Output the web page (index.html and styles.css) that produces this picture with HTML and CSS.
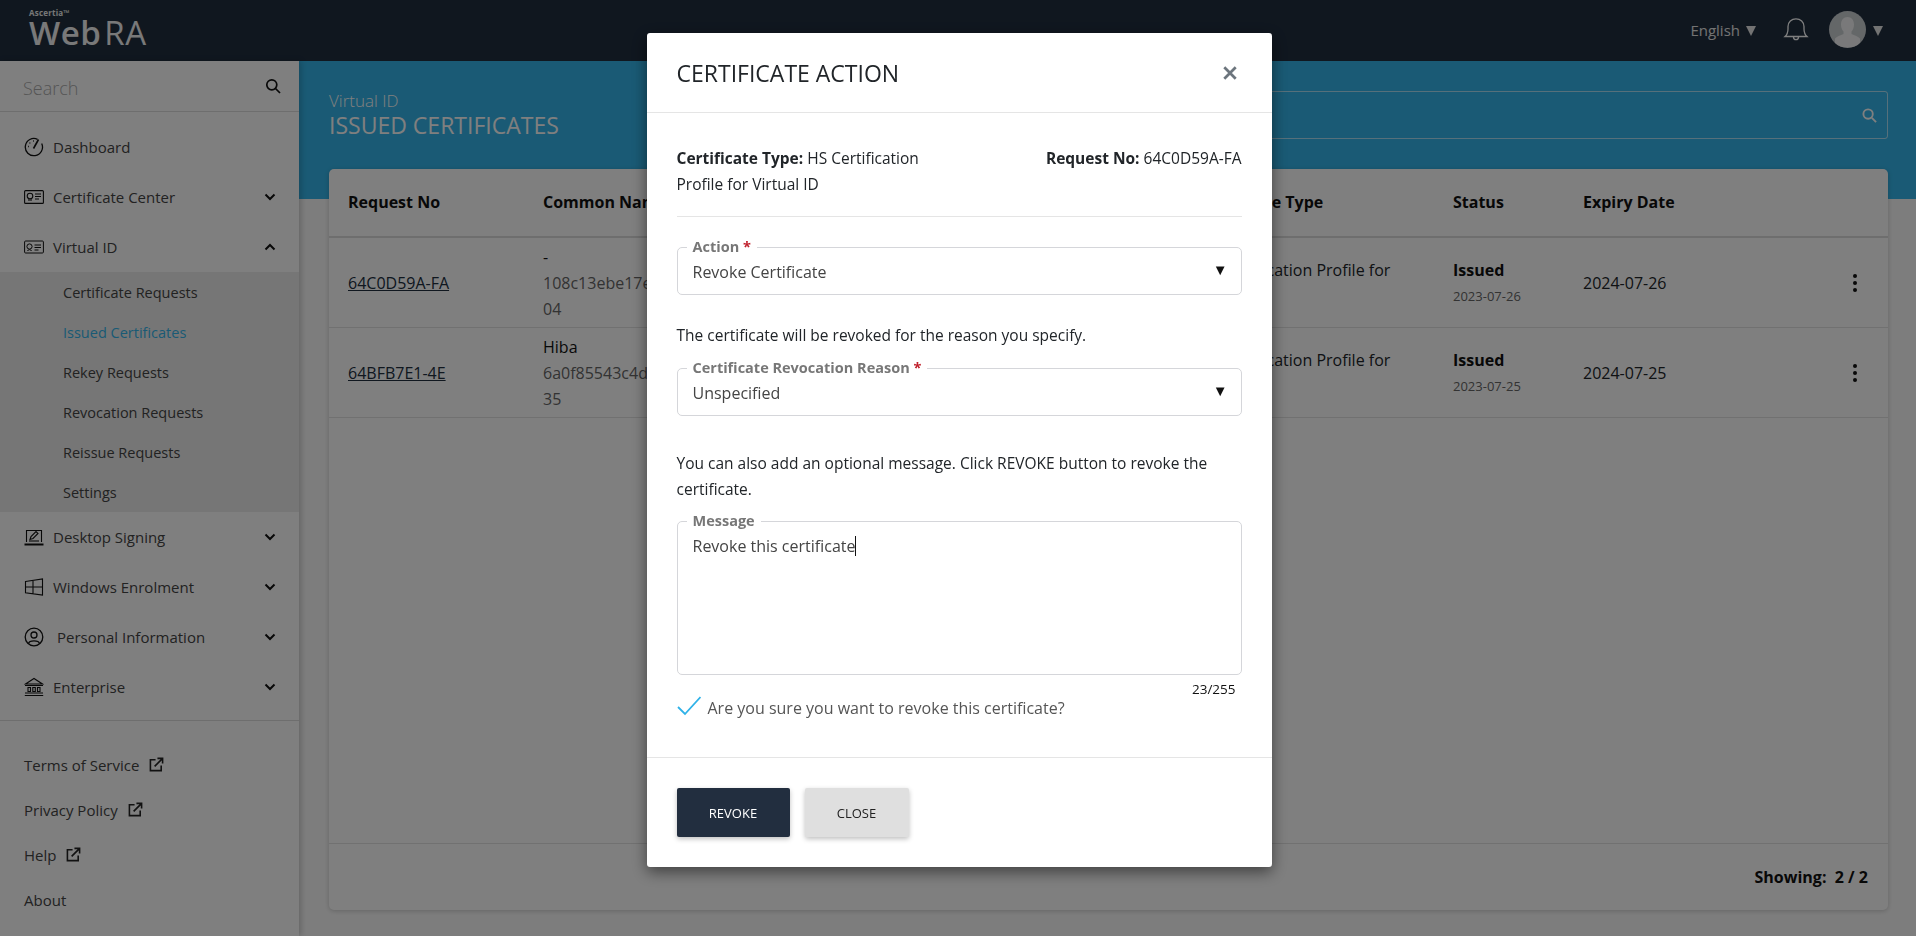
FILE: index.html
```html
<!DOCTYPE html>
<html lang="en">
<head>
    <meta charset="UTF-8">
    <title>WebRA - Issued Certificates</title>
    <link rel="stylesheet" href="styles.css">
</head>
<body>
    <header class="topbar">
        <div class="logo">
            <div class="logo-small">Ascertia&trade;</div>
            <div class="logo-big">Web<span class="logo-ra">RA</span></div>
        </div>
        <div class="topbar-right">
            <span class="lang">English</span>
            <span class="tri"></span>
            <svg class="bell" viewBox="0 0 26 26" fill="none" stroke="#fff" stroke-width="1.3">
                <path d="M2 20.5c2.2-2 3-3.6 3-7.5V10.5C5 6 8.500 2.800 13 2.800s8 3.200 8 7.700V13c0 3.900.8 5.500 3 7.500z"/>
                <path d="M10.500 21c0 3.600 5 3.600 5 0"/>
            </svg>
            <div class="avatar">
                <svg viewBox="0 0 37 37" width="37" height="37"><path fill="#fff" fill-opacity=".75" d="M18.500 6c4 0 6.500 3 6.500 7.500 0 3-1 5.500-2.500 7v2.500c3 1.500 7 2.500 8.500 4.500v9H6v-9c1.500-2 5.500-3 8.500-4.500v-2.500c-1.500-1.500-2.500-4-2.500-7C12 9 14.500 6 18.500 6z"/></svg>
            </div>
            <span class="tri tri-last"></span>
        </div>
    </header>

    <div class="layout">
        <aside class="sidebar">
            <div class="side-search">
                <span>Search</span>
                <svg class="search-icon" viewBox="0 0 16 16" fill="none" stroke="#111" stroke-width="1.700"><circle cx="6.800" cy="6.800" r="5"/><path d="M10.500 10.500L15 15"/></svg>
            </div>
            <nav class="side-nav">
                <a class="nav-item">
                    <svg class="nav-icon" viewBox="0 0 20 20" fill="none" stroke="#111" stroke-width="1.300"><path d="M13.500 2.300A8.600 8.600 0 1 0 17.700 6.500"/><path d="M9.500 11.500L14.500 2.500" stroke-width="1.600"/><path d="M4 9.500h.8M5.500 6h.8M9 4h.8"/></svg>
                    <span>Dashboard</span>
                </a>
                <a class="nav-item">
                    <svg class="nav-icon" viewBox="0 0 20 20" fill="none" stroke="#111" stroke-width="1.100"><rect x=".6" y="3.600" width="18.800" height="12.800" rx="1"/><circle cx="6" cy="9" r="2.800"/><path d="M5 12v2M7 12v2M11 7h6M11 9.500h6M11 12h4"/></svg>
                    <span>Certificate Center</span>
                    <svg class="chev" viewBox="0 0 12 8"><path d="M1.500 1.500L6 6l4.500-4.500"/></svg>
                </a>
                <a class="nav-item">
                    <svg class="nav-icon" viewBox="0 0 20 20" fill="none" stroke="#111" stroke-width="1"><rect x=".6" y="4" width="18.800" height="12" rx="1"/><circle cx="5.500" cy="9.500" r="2.600"/><path d="M3.500 14c.5-1.800 3.500-1.800 4 0M10.500 8h6.500M10.500 10.500h6.500M10.500 13h4"/></svg>
                    <span>Virtual ID</span>
                    <svg class="chev" viewBox="0 0 12 8"><path d="M1.500 6.500L6 2l4.500 4.500"/></svg>
                </a>
                <div class="sub-nav">
                    <a class="sub-item">Certificate Requests</a>
                    <a class="sub-item active">Issued Certificates</a>
                    <a class="sub-item">Rekey Requests</a>
                    <a class="sub-item">Revocation Requests</a>
                    <a class="sub-item">Reissue Requests</a>
                    <a class="sub-item">Settings</a>
                </div>
                <a class="nav-item">
                    <svg class="nav-icon" viewBox="0 0 20 20" fill="none" stroke="#111" stroke-width="1.100"><path d="M2.500 15V3.500h15V15"/><path d="M.5 17.500h19" stroke-width="2"/><path d="M6 12.500l1-3 5-5 2 2-5 5z"/><path d="M5 14h10" /></svg>
                    <span>Desktop Signing</span>
                    <svg class="chev" viewBox="0 0 12 8"><path d="M1.500 1.500L6 6l4.500-4.500"/></svg>
                </a>
                <a class="nav-item">
                    <svg class="nav-icon" viewBox="0 0 20 20" fill="none" stroke="#111" stroke-width="1.100"><path d="M1.500 4.500L18.500 2v16L1.500 15.800zM1.500 10h17M9 3.400v13.500"/></svg>
                    <span>Windows Enrolment</span>
                    <svg class="chev" viewBox="0 0 12 8"><path d="M1.500 1.500L6 6l4.500-4.500"/></svg>
                </a>
                <a class="nav-item nav-item-wide">
                    <svg class="nav-icon" viewBox="0 0 20 20" fill="none" stroke="#111" stroke-width="1.300"><circle cx="10" cy="10" r="8.800"/><circle cx="10" cy="8" r="3"/><path d="M4.500 16.500c.8-3.500 10.200-3.500 11 0"/></svg>
                    <span>Personal Information</span>
                    <svg class="chev" viewBox="0 0 12 8"><path d="M1.500 1.500L6 6l4.500-4.500"/></svg>
                </a>
                <a class="nav-item">
                    <svg class="nav-icon" viewBox="0 0 20 20" fill="none" stroke="#111" stroke-width="1.100"><path d="M1.500 7L10 1.500 18.500 7zM1 8.500h18M1 16h18M.8 18.500h18.400"/><path d="M4 10.500h2.500v4H4zM8.800 10.500h2.500v4H8.800zM13.500 10.500H16v4h-2.500z"/></svg>
                    <span>Enterprise</span>
                    <svg class="chev" viewBox="0 0 12 8"><path d="M1.500 1.500L6 6l4.500-4.500"/></svg>
                </a>
            </nav>
            <div class="side-links">
                <a class="side-link">Terms of Service
                    <svg class="ext" viewBox="0 0 16 16" fill="none" stroke="#222" stroke-width="1.700"><path d="M7 3H1.500v11.500H13V9"/><path d="M6 10l8-8M9 1.500h5.500V7"/></svg>
                </a>
                <a class="side-link">Privacy Policy
                    <svg class="ext" viewBox="0 0 16 16" fill="none" stroke="#222" stroke-width="1.700"><path d="M7 3H1.500v11.500H13V9"/><path d="M6 10l8-8M9 1.500h5.500V7"/></svg>
                </a>
                <a class="side-link">Help
                    <svg class="ext" viewBox="0 0 16 16" fill="none" stroke="#222" stroke-width="1.700"><path d="M7 3H1.500v11.500H13V9"/><path d="M6 10l8-8M9 1.500h5.500V7"/></svg>
                </a>
                <a class="side-link">About</a>
            </div>
        </aside>

        <main class="content">
            <div class="band">
                <div class="crumbs">
                    <div class="crumb">Virtual ID</div>
                    <h1 class="page-title">ISSUED CERTIFICATES</h1>
                </div>
                <div class="band-search">
                    <span>Search by request no</span>
                    <svg class="band-search-icon" viewBox="0 0 16 16" fill="none" stroke="#fff" stroke-width="2"><circle cx="6.500" cy="6.500" r="5"/><path d="M10.500 10.500L15 15"/></svg>
                </div>
            </div>

            <section class="card">
                <div class="row row-head">
                    <div>Request No</div>
                    <div>Common Name</div>
                    <div>Certificate Type</div>
                    <div>Status</div>
                    <div>Expiry Date</div>
                </div>
                <div class="row">
                    <div><a class="req-link">64C0D59A-FA</a></div>
                    <div>
                        <div class="cn">-</div>
                        <div class="muted">108c13ebe17e4a9c2d70f5b1</div>
                        <div class="muted">04</div>
                    </div>
                    <div class="type-cell">HS Certification Profile for Virtual ID</div>
                    <div>
                        <div class="status">Issued</div>
                        <div class="status-date">2023-07-26</div>
                    </div>
                    <div>2024-07-26</div>
                    <div class="dots"><i></i><i></i><i></i></div>
                </div>
                <div class="row">
                    <div><a class="req-link">64BFB7E1-4E</a></div>
                    <div>
                        <div class="cn">Hiba</div>
                        <div class="muted">6a0f85543c4d1e7b92c0a6f3</div>
                        <div class="muted">35</div>
                    </div>
                    <div class="type-cell">HS Certification Profile for Virtual ID</div>
                    <div>
                        <div class="status">Issued</div>
                        <div class="status-date">2023-07-25</div>
                    </div>
                    <div>2024-07-25</div>
                    <div class="dots"><i></i><i></i><i></i></div>
                </div>
                <div class="card-spacer"></div>
                <div class="card-foot">Showing: &nbsp;2 / 2</div>
            </section>
        </main>
    </div>

    <div class="overlay">
        <div class="modal">
            <div class="modal-head">
                <h2>CERTIFICATE ACTION</h2>
                <svg class="modal-close" viewBox="0 0 14 14" stroke="#6c757d" stroke-width="2.400"><path d="M2 2l10 10M12 2L2 12"/></svg>
            </div>
            <div class="modal-body">
                <div class="info-row">
                    <div class="info-type"><b>Certificate Type:</b> HS Certification Profile for Virtual ID</div>
                    <div><b>Request No:</b> 64C0D59A-FA</div>
                </div>
                <div class="field field-action">
                    <label>Action <em>*</em></label>
                    <span>Revoke Certificate</span>
                    <span class="select-arrow">&#9660;</span>
                </div>
                <p class="note note-first">The certificate will be revoked for the reason you specify.</p>
                <div class="field field-reason">
                    <label>Certificate Revocation Reason <em>*</em></label>
                    <span>Unspecified</span>
                    <span class="select-arrow">&#9660;</span>
                </div>
                <p class="note note-second">You can also add an optional message. Click REVOKE button to revoke the certificate.</p>
                <div class="field field-message">
                    <label>Message</label>
                    <span class="message-text">Revoke this certificate</span>
                </div>
                <div class="counter">23/255</div>
                <div class="confirm">
                    <svg class="check" viewBox="0 0 24 20" fill="none" stroke="#2fb2e8" stroke-width="1.800"><path d="M1 11l7 7L23.500 1"/></svg>
                    <span>Are you sure you want to revoke this certificate?</span>
                </div>
            </div>
            <div class="modal-foot">
                <button class="btn btn-dark">REVOKE</button>
                <button class="btn btn-light">CLOSE</button>
            </div>
        </div>
    </div>
</body>
</html>
```

FILE: styles.css
```css
* {
    box-sizing: border-box;
}

body {
    margin: 0;
    height: 936px;
    overflow: hidden;
    display: flex;
    flex-direction: column;
    font-family: "Open Sans", "Noto Sans", sans-serif;
    font-size: 15px;
    color: #212529;
    background-color: #fbfbfb;
}

/* Top bar */
.topbar {
    height: 61px;
    flex: none;
    background-color: #202e3f;
    display: flex;
    justify-content: space-between;
    color: #fff;
    padding: 0 33px 0 29px;
}

.logo {
    padding-top: 9px;
    line-height: 1;
}

.logo-small {
    font-size: 8px;
    font-weight: 700;
    letter-spacing: 0.2px;
    color: #eee;
}

.logo-big {
    font-size: 33px;
    font-weight: 600;
    margin-top: -1px;
    color: #f2f2f2;
    letter-spacing: 0.5px;
}

.logo-ra {
    margin-left: 3px;
    font-weight: 400;
}

.topbar-right {
    display: flex;
    align-items: center;
}

.lang {
    font-size: 15px;
    color: #e6e6e6;
    margin-top: -2px;
}

.tri {
    width: 0;
    height: 0;
    margin-left: 6px;
    border-left: 5px solid transparent;
    border-right: 5px solid transparent;
    border-top: 10px solid #e6e6e6;
}

.tri-last {
    margin-left: 7px;
}

.bell {
    width: 26px;
    height: 26px;
    margin: -4px 20px 0 27px;
}

.avatar {
    width: 37px;
    height: 37px;
    border-radius: 50%;
    background-color: #c9ced1;
    overflow: hidden;
    margin-top: -2px;
}

.avatar svg {
    display: block;
}

/* Sidebar */
.layout {
    flex: 1;
    display: flex;
    min-height: 0;
}

.sidebar {
    width: 299px;
    flex: none;
    background-color: #fff;
    box-shadow: 2px 0 6px rgba(0, 0, 0, 0.2);
    position: relative;
    display: flex;
    flex-direction: column;
}

.side-search {
    height: 51px;
    border-bottom: 1px solid #ddd;
    display: flex;
    align-items: center;
    justify-content: space-between;
    padding: 4px 18px 0 23px;
    font-size: 18px;
    font-weight: 300;
    color: #aaa;
}

.search-icon {
    width: 16px;
    height: 16px;
    margin-top: -4px;
}

.side-nav {
    padding-top: 10px;
    border-bottom: 1px solid #ddd;
    padding-bottom: 8px;
}

.nav-item {
    height: 50px;
    display: flex;
    align-items: center;
    padding: 0 23px 0 24px;
    color: #444;
    font-size: 15px;
}

.nav-icon {
    width: 20px;
    height: 20px;
    margin-right: 9px;
    flex: none;
}

.nav-item-wide .nav-icon {
    margin-right: 13px;
}

.chev {
    width: 12px;
    height: 8px;
    margin-left: auto;
    fill: none;
    stroke: #111;
    stroke-width: 2;
}

.sub-nav {
    background-color: #ececec;
    padding: 0;
}

.sub-item {
    display: flex;
    align-items: center;
    height: 40px;
    padding-left: 63px;
    font-size: 14.500px;
    color: #444;
}

.sub-item.active {
    color: #34b5ea;
}

.side-links {
    padding: 21px 24px 0;
}

.side-link {
    display: flex;
    align-items: center;
    gap: 10px;
    height: 45px;
    font-size: 15px;
    color: #444;
}

.ext {
    width: 15px;
    height: 15px;
}

/* Main content */
.content {
    flex: 1;
    min-width: 0;
    display: flex;
    flex-direction: column;
}

.band {
    height: 138px;
    flex: none;
    background-color: #34b5ea;
    display: flex;
    justify-content: space-between;
    padding: 29px 28px 0 30px;
    color: #fff;
}

.crumb {
    font-size: 17px;
    font-weight: 300;
    line-height: 21px;
}

.page-title {
    margin: 0;
    font-size: 23px;
    font-weight: 400;
    line-height: 29px;
}

.band-search {
    width: 800px;
    height: 48px;
    border: 1px solid rgba(255, 255, 255, 0.6);
    border-radius: 3px;
    display: flex;
    align-items: center;
    justify-content: space-between;
    padding: 0 10px 0 16px;
    font-weight: 700;
    margin-top: 1px;
    color: rgba(255, 255, 255, 0.75);
}

.band-search-icon {
    width: 15px;
    height: 15px;
}

.card {
    flex: 1;
    margin: -30px 28px 26px 30px;
    background-color: #fff;
    border-radius: 5px;
    box-shadow: 0 1px 5px rgba(0, 0, 0, 0.2);
    display: flex;
    flex-direction: column;
}

.row {
    display: grid;
    grid-template-columns: 195px 654px 256px 130px 1fr 66px;
    align-items: center;
    height: 90px;
    padding-left: 19px;
    border-bottom: 1px solid #e3e3e3;
    line-height: 26px;
    font-size: 16px;
}

.row-head {
    height: 69px;
    font-weight: 700;
    color: #111;
    border-bottom: 2px solid #ddd;
    padding-bottom: 2px;
}

.req-link {
    color: #202e3f;
    text-decoration: underline;
    font-weight: 500;
}

.cn {
    color: #111;
}

.muted {
    color: #666;
}

.type-cell {
    max-width: 215px;
}

.status {
    font-weight: 700;
    color: #111;
}

.status-date {
    font-size: 13px;
    color: #666;
}

.dots {
    display: flex;
    flex-direction: column;
    align-items: center;
    gap: 3px;
}

.dots i {
    width: 4px;
    height: 4px;
    border-radius: 50%;
    background-color: #111;
}

.card-spacer {
    flex: 1;
}

.card-foot {
    height: 67px;
    border-top: 1px solid #e3e3e3;
    display: flex;
    align-items: center;
    justify-content: flex-end;
    padding-right: 20px;
    font-weight: 700;
    font-size: 16px;
    color: #111;
}

/* Modal */
.overlay {
    position: fixed;
    top: 0;
    left: 0;
    width: 100%;
    height: 100%;
    background: rgba(0, 0, 0, 0.5);
    display: flex;
    justify-content: center;
    align-items: flex-start;
    padding: 33px 0 0 2px;
}

.modal {
    width: 625px;
    height: 834px;
    background-color: #fff;
    border-radius: 3px;
    box-shadow: 0 5px 15px rgba(0, 0, 0, 0.5);
    display: flex;
    flex-direction: column;
}

.modal-head {
    height: 80px;
    flex: none;
    border-bottom: 1px solid #e5e5e5;
    display: flex;
    align-items: center;
    justify-content: space-between;
    padding: 0 34px 0 30px;
}

.modal-head h2 {
    margin: 0;
    font-size: 23px;
    font-weight: 400;
    color: #212529;
}

.modal-close {
    width: 16px;
    height: 16px;
}

.modal-body {
    flex: 1;
    padding: 32px 30px 0;
}

.info-row {
    display: flex;
    justify-content: space-between;
    line-height: 26px;
    height: 72px;
    border-bottom: 1px solid #e5e5e5;
    font-size: 15.500px;
}

.info-type {
    width: 290px;
}

.field {
    position: relative;
    border: 1px solid #d5d6da;
    border-radius: 5px;
    padding: 12px 15px 0;
    height: 48px;
    font-size: 16px;
    color: #444;
    line-height: 24px;
}

.field label {
    position: absolute;
    top: -9px;
    left: 9px;
    padding: 0 6px;
    background-color: #fff;
    font-size: 14.500px;
    line-height: 16px;
    font-weight: 700;
    color: #777;
}

.field label em {
    font-style: normal;
    color: #c0202c;
}

.select-arrow {
    position: absolute;
    right: 13px;
    top: 9px;
    font-size: 15px;
    color: #111;
}

.field-action {
    margin-top: 30px;
}

.note {
    margin: 0;
    line-height: 26px;
    font-size: 15.500px;
    color: #212529;
}

.note-first {
    margin-top: 27px;
    margin-bottom: 20px;
}

.note-second {
    margin-top: 34px;
    margin-bottom: 19px;
}

.field-message {
    height: 154px;
}

.message-text {
    border-right: 1px solid #111;
    display: inline-block;
    line-height: 20px;
    padding-right: 0;
}

.counter {
    text-align: right;
    padding-right: 6px;
    font-size: 13.500px;
    line-height: 20px;
    margin-top: 4px;
    color: #111;
}

.confirm {
    display: flex;
    align-items: center;
    gap: 7px;
    margin-top: -2px;
    font-size: 16px;
    color: #555;
}

.check {
    width: 24px;
    height: 20px;
    margin-top: -5px;
}

.modal-foot {
    height: 110px;
    flex: none;
    border-top: 1px solid #e5e5e5;
    display: flex;
    gap: 15px;
    padding: 30px 30px 0;
}

.btn {
    height: 49px;
    border: none;
    border-radius: 2px;
    font-family: inherit;
    font-size: 13px;
    box-shadow: 0 2px 5px rgba(0, 0, 0, 0.25);
}

.btn-dark {
    width: 113px;
    background-color: #222e3f;
    color: #fff;
}

.btn-light {
    width: 104px;
    background-color: #dfdfdf;
    color: #222;
}
```
